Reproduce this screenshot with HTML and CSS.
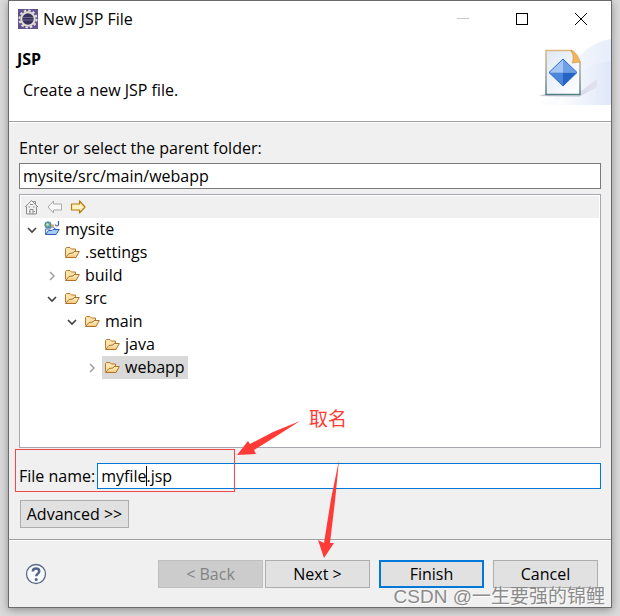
FILE: index.html
```html
<!DOCTYPE html>
<html lang="en">
<head>
  <meta charset="UTF-8">
  <meta name="viewport" content="width=device-width, initial-scale=1.0">
  <title>New JSP File</title>
  <link rel="stylesheet" href="styles.css">
</head>
<body>
  <!-- shared icons -->
  <svg class="defs" width="0" height="0" aria-hidden="true">
    <defs>
      <linearGradient id="folderFill" x1="0" y1="0" x2="0" y2="1">
        <stop offset="0" stop-color="#fff3cf"/>
        <stop offset="1" stop-color="#f3c774"/>
      </linearGradient>
      <symbol id="folder" viewBox="0 0 16 16">
        <path d="M1.500 12.500V4.500L2.500 3.500H6L7.500 5H11.500V7.500" fill="#fbe3ac" stroke="#b9782e"/>
        <path d="M1.500 13.500L5 9.500L9 9L10 7.500H15.300L12 13.500Z" fill="url(#folderFill)" stroke="#b0702a" stroke-linejoin="round"/>
      </symbol>
      <symbol id="open" viewBox="0 0 16 16">
        <path d="M4 6L8 10L12 6" fill="none" stroke="#404040" stroke-width="1.600"/>
      </symbol>
      <symbol id="closed" viewBox="0 0 16 16">
        <path d="M6 4L10 8L6 12" fill="none" stroke="#a0a0a0" stroke-width="1.500"/>
      </symbol>
    </defs>
  </svg>

  <div class="window">
    <div class="titlebar">
      <svg class="app-icon" width="20" height="20" viewBox="0 0 20 20">
        <rect width="20" height="20" fill="#63548f"/>
        <circle cx="10" cy="10" r="8.500" fill="none" stroke="#e5e2dc" stroke-width="2" stroke-dasharray="2.400 2.050"/>
        <circle cx="10" cy="10" r="6.700" fill="#38325a" stroke="#dedbd5" stroke-width="2"/>
        <path d="M5 8.500H15M5 11H15" stroke="#6a6589"/>
      </svg>
      <span class="caption">New JSP File</span>
      <button class="win-btn" aria-label="Minimize" disabled>
        <svg width="12" height="12" viewBox="0 0 12 12"><path d="M0 5.500H12" stroke="#c8c8c8"/></svg>
      </button>
      <button class="win-btn" aria-label="Maximize">
        <svg width="12" height="12" viewBox="0 0 12 12"><rect x=".5" y=".5" width="11" height="11" fill="none" stroke="#000"/></svg>
      </button>
      <button class="win-btn" aria-label="Close">
        <svg width="12" height="12" viewBox="0 0 12 12"><path d="M0 0L12 12M12 0L0 12" stroke="#000"/></svg>
      </button>
    </div>

    <div class="header">
      <div class="header-text">
        <h1>JSP</h1>
        <p>Create a new JSP file.</p>
      </div>
      <svg class="banner" width="75" height="68" viewBox="0 0 75 68">
        <defs>
          <linearGradient id="sweep" x1="0" y1="0" x2="1" y2="0">
            <stop offset="0" stop-color="#fff"/>
            <stop offset="1" stop-color="#dde6f8"/>
          </linearGradient>
          <linearGradient id="page" x1="0" y1="0" x2="1" y2="1">
            <stop offset="0" stop-color="#dfe8f6"/>
            <stop offset="1" stop-color="#fff"/>
          </linearGradient>
          <linearGradient id="shade" x1="0" y1="0" x2="1" y2="0">
            <stop offset="0" stop-color="#aaa5bb"/>
            <stop offset="1" stop-color="#dcdced"/>
          </linearGradient>
          <linearGradient id="pageLine" x1="0" y1="0" x2="0" y2="1">
            <stop offset="0" stop-color="#dfb67c"/>
            <stop offset=".5" stop-color="#a1a49b"/>
            <stop offset="1" stop-color="#527f83"/>
          </linearGradient>
        </defs>
        <path d="M0 68C27 53 37 7 75 2V68Z" fill="url(#sweep)" opacity=".7"/>
        <path d="M20 68C38 41 48 26 75 24V68Z" fill="url(#sweep)" opacity=".8"/>
        <path d="M3 59L12 56H43L61 42V50L43 60Z" fill="url(#shade)" opacity=".65"/>
        <path d="M10 13.500H35L44 25V57.500H10Z" fill="url(#page)" stroke="url(#pageLine)" stroke-width="1.500"/>
        <path d="M35 13C39 14 43 20 44 25L36 26C38 21 37 17 35 13Z" fill="#f3b45b" stroke="#d99339" stroke-width=".6"/>
        <path d="M27 22L13 35.500H27Z" fill="#a5c5f2"/>
        <path d="M27 22L41 35.500H27Z" fill="#6fa0e7"/>
        <path d="M13 35.500H27V49Z" fill="#4c86dd"/>
        <path d="M41 35.500H27V49Z" fill="#2464c4"/>
        <path d="M27 22L41 35.500L27 49L13 35.500Z" fill="none" stroke="#2c6bcc"/>
      </svg>
    </div>

    <div class="content">
      <label for="parent">Enter or select the parent folder:</label>
      <input type="text" id="parent" value="mysite/src/main/webapp">

      <div class="folder-box">
        <div class="tools">
          <button aria-label="Home" disabled>
            <svg width="16" height="16" viewBox="0 0 16 16" fill="none" stroke="#8c8c8c">
              <path d="M1 8L7.500 1.500L14 8M11.500 5V2.500H9.500V3"/>
              <path d="M2.500 7.500V15H12.500V7.500M6 15V10.500H9V15"/>
              <path d="M4.500 8H6M9 8H10.500M5 12.500H5.900M9.500 12.500H11M6 5.500H9"/>
            </svg>
          </button>
          <button aria-label="Back" disabled>
            <svg width="16" height="16" viewBox="0 0 16 16"><path d="M1 8L6.500 2V5H14.500V11H6.500V14Z" fill="#f8f8f8" stroke="#aaa" stroke-linejoin="round"/></svg>
          </button>
          <button aria-label="Forward">
            <svg width="16" height="16" viewBox="0 0 16 16"><path d="M15 8L9.500 2V5H1.500V11H9.500V14Z" fill="#fff2c2" stroke="#b97b0a" stroke-width="1.200" stroke-linejoin="round"/></svg>
          </button>
        </div>

        <ul class="tree">
          <li>
            <div class="row">
              <svg class="arrow"><use href="#open"/></svg>
              <span class="node">
                <svg viewBox="0 0 16 16">
                  <circle cx="4" cy="4" r="3.200" fill="#5da7a8" stroke="#4d7190" stroke-width=".8"/>
                  <path d="M2 3L4 2L5 4L3 5Z" fill="#d8e9a4"/>
                  <path d="M14.500 0V3.500Q14.500 5 13 5Q11.500 5 11.500 3.500" fill="none" stroke="#355f9d" stroke-width="1.200"/>
                  <path d="M1.500 13V8H6L7 6H9.500L11 8H12V9" fill="#e8eefb" stroke="#5375b8"/>
                  <path d="M7.500 4.500H10" stroke="#d9a84e" stroke-width="2"/>
                  <path d="M1.500 13.500L4.500 9.500L8 9.500L9 8.500H15.300L12 13.500Z" fill="#a6cbf5" stroke="#2d5eaf" stroke-linejoin="round"/>
                </svg>
                mysite
              </span>
            </div>
            <ul>
              <li>
                <div class="row">
                  <svg class="arrow"></svg>
                  <span class="node"><svg><use href="#folder"/></svg>.settings</span>
                </div>
              </li>
              <li>
                <div class="row">
                  <svg class="arrow"><use href="#closed"/></svg>
                  <span class="node"><svg><use href="#folder"/></svg>build</span>
                </div>
              </li>
              <li>
                <div class="row">
                  <svg class="arrow"><use href="#open"/></svg>
                  <span class="node"><svg><use href="#folder"/></svg>src</span>
                </div>
                <ul>
                  <li>
                    <div class="row">
                      <svg class="arrow"><use href="#open"/></svg>
                      <span class="node"><svg><use href="#folder"/></svg>main</span>
                    </div>
                    <ul>
                      <li>
                        <div class="row">
                          <svg class="arrow"></svg>
                          <span class="node"><svg><use href="#folder"/></svg>java</span>
                        </div>
                      </li>
                      <li>
                        <div class="row">
                          <svg class="arrow"><use href="#closed"/></svg>
                          <span class="node selected"><svg><use href="#folder"/></svg>webapp</span>
                        </div>
                      </li>
                    </ul>
                  </li>
                </ul>
              </li>
            </ul>
          </li>
        </ul>
      </div>

      <div class="file-row">
        <label for="fileName">File name:</label>
        <div class="file-field">
          <input type="text" id="fileName" value="myfile.jsp">
          <span class="caret"></span>
        </div>
        <div class="mark-box"></div>
        <svg class="mark-arrows" width="110" height="142" viewBox="0 0 110 142" fill="#fe3b37">
          <path d="M63 4L36 15L13 27L11 24L0 38L19 37L17 33L38 20Z"/>
          <path d="M102 43L94 82L87 126L81 123L87 141L97 126L93 126L98 84Z"/>
        </svg>
        <span class="mark-text" lang="zh">取名</span>
      </div>

      <button class="btn advanced">Advanced &gt;&gt;</button>
    </div>

    <div class="footer">
      <button class="help" aria-label="Help">
        <svg width="22" height="22" viewBox="0 0 22 22" fill="none">
          <circle cx="11" cy="11" r="9.500" fill="#f8f9fb" stroke="#5b6b8a" stroke-width="1.300"/>
          <path d="M7.800 8.500C7.800 4.300 14.300 4.600 14.300 8.200C14.300 10.600 11.200 10.700 11.200 13.300" stroke="#52638a" stroke-width="2.400"/>
          <circle cx="11.200" cy="16.400" r="1.500" fill="#52638a"/>
        </svg>
      </button>
      <div class="nav">
        <button class="btn" disabled>&lt; Back</button>
        <button class="btn">Next &gt;</button>
      </div>
      <button class="btn default">Finish</button>
      <button class="btn">Cancel</button>
    </div>
  </div>

  <div class="watermark" lang="zh">CSDN @一生要强的锦鲤</div>
</body>
</html>
```
FILE: styles.css
```css
* { box-sizing: border-box; }
body {
  margin: 0;
  padding: 0 8px 8px;
  min-height: 100vh;
  display: flex;
  position: relative;
  background: #dadada;
  color: #000;
  font: 16px/20px "Open Sans", "Noto Sans", "Noto Sans CJK SC", sans-serif;
}
button, input { font: inherit; color: inherit; }
svg { display: block; flex: none; }
.defs { position: absolute; }

.window {
  flex: 1;
  min-width: 0;
  display: flex;
  flex-direction: column;
  background: #f0f0f0;
  border: 1px solid #6b6b6b;
  box-shadow: 0 2px 8px rgba(0,0,0,0.35);
}

/* title bar */
.titlebar {
  display: flex;
  align-items: center;
  height: 36px;
  padding-left: 9px;
  background: #fff;
}
.caption { flex: 1; margin-left: 5px; }
.win-btn {
  display: flex;
  justify-content: center;
  align-items: center;
  width: 59px;
  height: 36px;
  padding: 0;
  border: none;
  background: none;
}
.win-btn:last-child { margin-right: 1px; }

/* wizard header */
.header {
  display: flex;
  justify-content: space-between;
  height: 85px;
  background: #fff;
  border-bottom: 1px solid #a0a0a0;
}
.header-text { padding: 12px 0 0 8px; }
.header h1 {
  margin: 0;
  font-size: 16px;
  line-height: 20px;
}
.header p { margin: 11px 0 0 6px; }

/* form */
.content {
  flex: 1;
  display: flex;
  flex-direction: column;
  padding: 15px 10px 11px;
  border-top: 1px solid #fff;
  border-bottom: 1px solid #a0a0a0;
}
input {
  width: 100%;
  height: 26px;
  padding: 0 3px;
  border: 1px solid #7a7a7a;
  background: #fff;
  outline: none;
}
#parent { margin-top: 5px; }
.folder-box {
  flex: 1;
  margin-top: 5px;
  padding: 1px;
  border: 1px solid #a5a8af;
  background: #fff;
}
.tools {
  display: flex;
  align-items: center;
  gap: 7px;
  height: 22px;
  padding-left: 3px;
  background: #f0f0f0;
}
.tools button {
  padding: 0;
  border: none;
  background: none;
}

.tree, .tree ul {
  margin: 0;
  padding: 0;
  list-style: none;
}
.tree { padding-left: 3px; }
.tree ul { padding-left: 20px; }
.row {
  display: flex;
  align-items: center;
  height: 23px;
}
.row svg { width: 16px; height: 16px; }
.node {
  display: flex;
  align-items: center;
  gap: 5px;
  height: 23px;
  margin-left: 2px;
  padding: 0 3px 1px 2px;
}
.node.selected { background: #d9d9d9; }

.file-row {
  display: flex;
  align-items: center;
  gap: 2px;
  position: relative;
  margin-top: 15px;
}
.file-field { flex: 1; position: relative; }
.file-field input { border-color: #0078d7; }
.caret {
  position: absolute;
  left: 49px;
  top: 3px;
  width: 1px;
  height: 20px;
  background: #000;
}

.btn {
  width: 105px;
  height: 28px;
  padding: 0;
  border: 1px solid #adadad;
  background: #e1e1e1;
}
.btn:disabled {
  border-color: #bfbfbf;
  background: #ccc;
  color: #838383;
}
.btn.default { border: 2px solid #0078d7; }
.advanced {
  width: 109px;
  margin: 11px 0 0 1px;
}

/* dialog buttons */
.footer {
  display: flex;
  align-items: center;
  gap: 9px;
  padding: 19px 13px 19px 16px;
  border-top: 1px solid #fff;
}
.help {
  margin-right: auto;
  padding: 0;
  border: none;
  background: none;
}
.nav { display: flex; gap: 2px; }

/* red hints over the form */
.mark-box {
  position: absolute;
  left: -4px;
  top: -14px;
  width: 220px;
  height: 43px;
  border: 1px solid #f04848;
  pointer-events: none;
}
.mark-arrows {
  position: absolute;
  left: 218px;
  top: -46px;
  pointer-events: none;
}
.mark-text {
  position: absolute;
  left: 290px;
  top: -57px;
  color: #fe3b37;
  font: 19px/24px "Noto Sans CJK SC", sans-serif;
}

.watermark {
  position: absolute;
  right: 15px;
  bottom: 7px;
  color: #8b8b8b;
  font: 19px/24px "Liberation Sans", "Noto Sans CJK SC", sans-serif;
  text-shadow: 1px 1px 0 #fff;
  pointer-events: none;
}
```
